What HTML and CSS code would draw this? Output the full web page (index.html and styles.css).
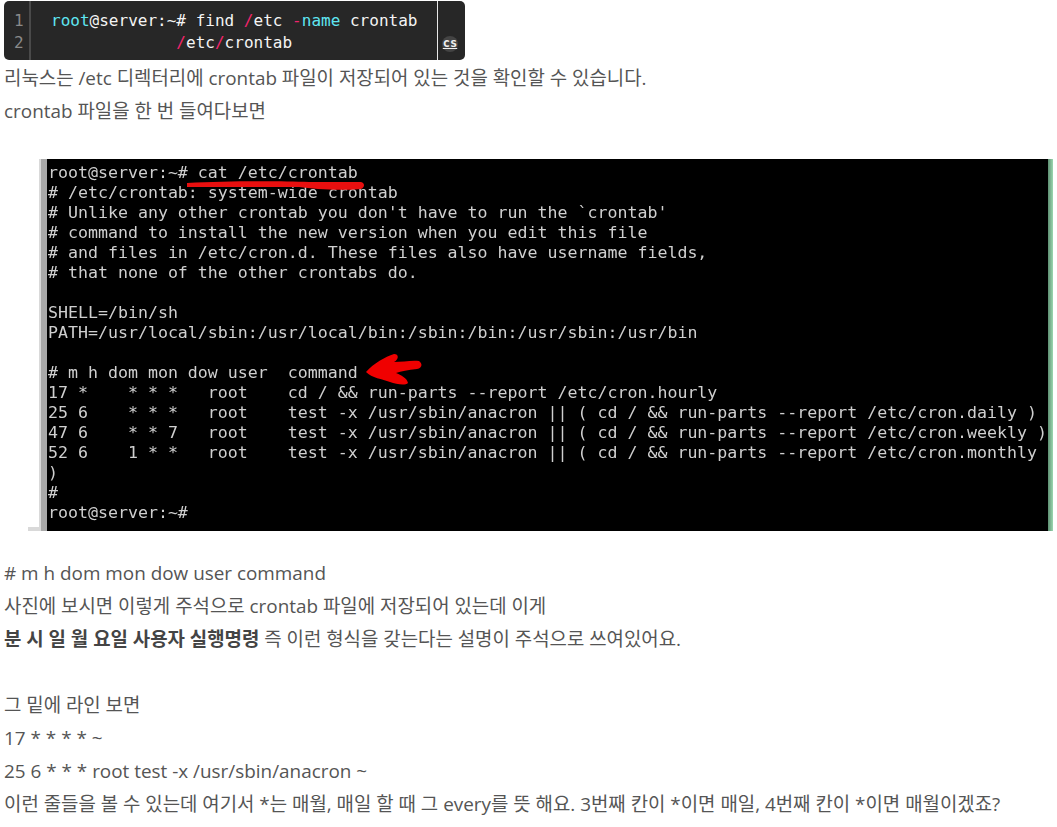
FILE: index.html
```html
<!DOCTYPE html>
<html lang="ko">
<head>
<meta charset="utf-8">
<title>crontab</title>
<link rel="stylesheet" href="styles.css">
</head>
<body>
<div class="code">
  <div class="gutter"><span>1</span><span>2</span></div>
  <pre class="source"><span class="cy">root</span>@server:~# find <span class="pk">/</span>etc <span class="pk">-</span><span class="cy">name</span> crontab
             <span class="pk">/</span>etc<span class="pk">/</span>crontab</pre>
  <div class="lang"><span class="badge">cs</span></div>
</div>
<div class="intro">
<p>리눅스는 /etc 디렉터리에 crontab 파일이 저장되어 있는 것을 확인할 수 있습니다.</p>
<p>crontab 파일을 한 번 들여다보면</p>
</div>
<div class="shot">
  <div class="frame"></div>
  <div class="term">
<pre>root@server:~# cat /etc/crontab
# /etc/crontab: system-wide crontab
# Unlike any other crontab you don't have to run the `crontab'
# command to install the new version when you edit this file
# and files in /etc/cron.d. These files also have username fields,
# that none of the other crontabs do.

SHELL=/bin/sh
PATH=/usr/local/sbin:/usr/local/bin:/sbin:/bin:/usr/sbin:/usr/bin

# m h dom mon dow user  command
17 *    * * *   root    cd / &amp;&amp; run-parts --report /etc/cron.hourly
25 6    * * *   root    test -x /usr/sbin/anacron || ( cd / &amp;&amp; run-parts --report /etc/cron.daily )
47 6    * * 7   root    test -x /usr/sbin/anacron || ( cd / &amp;&amp; run-parts --report /etc/cron.weekly )
52 6    1 * *   root    test -x /usr/sbin/anacron || ( cd / &amp;&amp; run-parts --report /etc/cron.monthly
)
#
root@server:~#</pre>
    <svg class="marks" width="1001" height="372" viewBox="0 0 1001 372">
      <path d="M140 24 C180 22 230 22 262 23 L314 23 C318 24 318 28 314 30 C290 32 268 30 252 28 C215 28 175 28 140 28 Z" fill="#e80f0f"/>
      <path d="M319 213 C327 204 338 198 347 195 C352 195 352 200 347 203 C355 203 365 201 372 202 C376 205 375 209 370 210 C361 211 354 212 349 214 C354 216 360 219 361 224 C358 227 349 225 343 223 C335 220 325 219 319 213 Z" fill="#f00000"/>
    </svg>
  </div>
  <div class="edge"></div>
</div>
<p># m h dom mon dow user command</p>
<p>사진에 보시면 이렇게 주석으로 crontab 파일에 저장되어 있는데 이게</p>
<p><strong>분 시 일 월 요일 사용자 실행명령</strong> 즉 이런 형식을 갖는다는 설명이 주석으로 쓰여있어요.</p>
<p class="blank">&nbsp;</p>
<p>그 밑에 라인 보면</p>
<p>17 * * * * ~</p>
<p>25 6 * * * root test -x /usr/sbin/anacron ~</p>
<p>이런 줄들을 볼 수 있는데 여기서 *는 매월, 매일 할 때 그 every를 뜻 해요. 3번째 칸이 *이면 매일, 4번째 칸이 *이면 매월이겠죠?</p>
</body>
</html>
```
FILE: styles.css
```css
html, body {
  margin: 0;
  background: #fff;
}
body {
  padding: 1px 4px 0;
  height: 826px;
  box-sizing: border-box;
  overflow: hidden;
  font-family: "Open Sans", "Noto Sans CJK KR", sans-serif;
  font-size: 18.9px;
  line-height: 33px;
  color: #555;
}
p {
  margin: 0;
  white-space: nowrap;
}
strong {
  font-weight: 700;
  color: #444;
}
.intro {
  margin-top: 2px;
}
.code {
  display: flex;
  width: 461px;
  height: 59px;
  background: #272727;
  border-radius: 5px;
  overflow: hidden;
  font-family: "DejaVu Sans Mono", monospace;
  font-size: 16.03px;
  line-height: 22px;
  color: #f4f4f4;
}
.gutter {
  width: 27px;
  box-sizing: border-box;
  padding: 9px 0 0 10px;
  border-right: 2px solid #4a4a4a;
  display: flex;
  flex-direction: column;
  color: #8a8a8a;
}
.source {
  flex: 1;
  margin: 0;
  padding: 9px 0 0 20px;
  font: inherit;
}
.cy { color: #5fe6f2; }
.pk { color: #f0246c; }
.lang {
  width: 28px;
  border-left: 1px solid #e8e8e8;
  display: flex;
  align-items: flex-end;
  justify-content: center;
  padding: 0 3px 8px 0;
  box-sizing: border-box;
}
.badge {
  width: 16px;
  height: 16px;
  border-radius: 50%;
  background: #444;
  color: #eee;
  font: 700 12px/15px "DejaVu Sans Mono", monospace;
  text-align: center;
  text-decoration: underline;
}
.shot {
  display: flex;
  margin: 31px 0 26px 24px;
  width: 1025px;
  height: 372px;
}
.frame {
  width: 19px;
  box-sizing: border-box;
  flex: none;
  height: 372px;
  background: linear-gradient(#fff, #fff) 0 0 / 11px 368px no-repeat, #d9d9d9;
  border-right: 6px solid #a9a9a9;
}
.term {
  position: relative;
  width: 1001px;
  background: #000;
  overflow: hidden;
}
.term pre {
  margin: 0;
  padding: 4px 0 0 1px;
  font-family: "DejaVu Sans Mono", monospace;
  font-size: 16.6px;
  line-height: 20px;
  color: #cfcfcf;
  filter: blur(0.45px);
}
.marks {
  position: absolute;
  inset: 0;
  filter: blur(0.5px);
}
.edge {
  width: 5px;
  background: linear-gradient(90deg, #5e8f72, #9bd8b0);
}
```
